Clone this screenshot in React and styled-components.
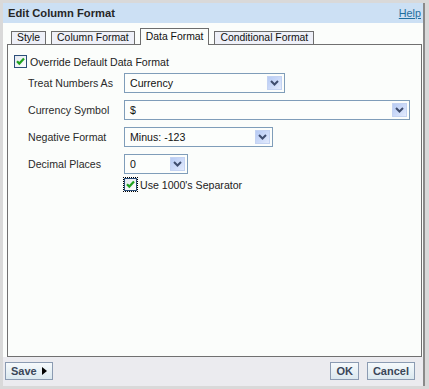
import React from 'react';
import styled, { createGlobalStyle } from 'styled-components';

const GlobalStyle = createGlobalStyle`
  html, body { margin: 0; padding: 0; }
  body {
    background: #d8d8d8;
    font-family: "Liberation Sans", Arial, sans-serif;
    color: #222;
  }
`;

const Page = styled.div`
  box-sizing: border-box;
  width: 429px;
  height: 389px;
  padding: 3px 4px 3px 3px;
  background: #d9d9d9;
`;

const Dialog = styled.div`
  box-sizing: border-box;
  width: 422px;
  height: 383px;
  border-right: 2px solid #8a8a8a;
  display: flex;
  flex-direction: column;
  background: #fbfdfb;
`;

const TitleBar = styled.div`
  height: 20px;
  flex: none;
  background: #cce0f4;
  display: flex;
  align-items: center;
  justify-content: space-between;
  padding: 0 2px 0 5px;
`;

const Title = styled.div`
  font-weight: bold;
  font-size: 11.2px;
  color: #262626;
`;

const HelpLink = styled.a`
  font-size: 10.8px;
  color: #1f6e9e;
  text-decoration: underline;
  cursor: pointer;
`;

const Body = styled.div`
  flex: 1;
  display: flex;
  flex-direction: column;
  padding: 5px 1px 0 4px;
  background: #fbfdfb;
`;

const TabRow = styled.div`
  height: 16px;
  flex: none;
  display: flex;
  align-items: flex-start;
  gap: 5px;
  padding-left: 4px;
`;

const Tab = styled.div`
  box-sizing: border-box;
  position: relative;
  z-index: 1;
  height: ${p => (p.$active ? '17px' : '13px')};
  margin-top: ${p => (p.$active ? '0' : '3px')};
  padding: ${p => (p.$active ? '2px 5px 0' : '0 5px')};
  border: 1px solid #6d6d6d;
  border-bottom: none;
  background: ${p => (p.$active ? '#fbfdfb' : '#eef0f8')};
  font-size: 10.4px;
  line-height: 12px;
  color: #111;
  white-space: nowrap;
`;

const Panel = styled.div`
  flex: 1;
  border: 1px solid #707070;
  background: #fbfdfb;
  padding: 10px 6px;
  display: flex;
  flex-direction: column;
`;

const CheckRow = styled.label`
  display: flex;
  align-items: center;
  gap: 3px;
  height: 13px;
  font-size: 10.6px;
  color: #222;
  margin-left: ${p => p.$indent || 0}px;
  margin-top: ${p => p.$top || 0}px;
`;

const CheckBoxFrame = styled.span`
  display: inline-flex;
  width: 13px;
  height: 13px;
  outline: ${p => (p.$focus ? '1px dotted #000' : 'none')};
`;

const Form = styled.div`
  display: grid;
  grid-template-columns: 96px auto;
  grid-auto-rows: 20px;
  row-gap: 7px;
  align-items: center;
  margin-top: 5px;
  padding-left: 14px;
`;

const Label = styled.div`
  font-size: 10.6px;
  color: #2a2a2a;
`;

const Select = styled.div`
  box-sizing: border-box;
  width: ${p => p.$w}px;
  height: 20px;
  border: 1px solid #7f9db9;
  background: #fcfefc;
  display: flex;
  align-items: center;
  padding: 0 2px 0 5px;
`;

const SelectText = styled.span`
  flex: 1;
  font-size: 10.6px;
  color: #111;
`;

const DropButton = styled.span`
  box-sizing: border-box;
  width: 15px;
  height: 14px;
  border: 1px solid #c4d3f2;
  background: linear-gradient(135deg, #b7cbf4 0%, #cddbf9 55%, #e3ebfd 100%);
  display: flex;
  align-items: center;
  justify-content: center;
`;

const Footer = styled.div`
  height: 29px;
  flex: none;
  background: #ebebef;
  display: flex;
  align-items: flex-start;
  justify-content: space-between;
  padding: 5px 8px 0 2px;
  box-sizing: border-box;
`;

const ButtonGroup = styled.div`
  display: flex;
  gap: 8px;
`;

const Button = styled.button`
  box-sizing: border-box;
  height: 18px;
  padding: 0 5px;
  border: 1px solid #8b9bb2;
  background: linear-gradient(#f6fafc, #dbe8ef);
  color: #3a4658;
  font-family: "Liberation Sans", Arial, sans-serif;
  font-weight: bold;
  font-size: 11px;
  display: inline-flex;
  align-items: center;
  gap: 5px;
  cursor: pointer;
`;

const Chevron = () => (
  <svg width="9" height="6" viewBox="0 0 9 6">
    <path d="M1 1 L4.5 4.5 L8 1" fill="none" stroke="#3e4d6e" strokeWidth="2" />
  </svg>
);

const Check = () => (
  <svg width="13" height="13" viewBox="0 0 13 13">
    <defs>
      <linearGradient id="cbg" x1="0" y1="0" x2="1" y2="1">
        <stop offset="0" stopColor="#e2e8ef" />
        <stop offset="1" stopColor="#ffffff" />
      </linearGradient>
    </defs>
    <rect x="0.5" y="0.5" width="12" height="12" fill="url(#cbg)" stroke="#2c4f79" />
    <path d="M3 6.2 L5.3 8.6 L10 3.6" fill="none" stroke="#1fa21f" strokeWidth="2.2" />
  </svg>
);

const Dropdown = ({ w, value }) => (
  <Select $w={w}>
    <SelectText>{value}</SelectText>
    <DropButton>
      <Chevron />
    </DropButton>
  </Select>
);

const Triangle = () => (
  <svg width="5" height="8" viewBox="0 0 5 8">
    <path d="M0 0 L5 4 L0 8 Z" fill="#000" />
  </svg>
);

export default function App() {
  return (
    <>
      <GlobalStyle />
      <Page>
        <Dialog>
          <TitleBar>
            <Title>Edit Column Format</Title>
            <HelpLink>Help</HelpLink>
          </TitleBar>
          <Body>
            <TabRow>
              <Tab>Style</Tab>
              <Tab>Column Format</Tab>
              <Tab $active>Data Format</Tab>
              <Tab>Conditional Format</Tab>
            </TabRow>
            <Panel>
              <CheckRow>
                <CheckBoxFrame><Check /></CheckBoxFrame>
                Override Default Data Format
              </CheckRow>
              <Form>
                <Label>Treat Numbers As</Label>
                <Dropdown w={161} value="Currency" />
                <Label>Currency Symbol</Label>
                <Dropdown w={286} value="$" />
                <Label>Negative Format</Label>
                <Dropdown w={149} value="Minus: -123" />
                <Label>Decimal Places</Label>
                <Dropdown w={64} value="0" />
              </Form>
              <CheckRow $indent={110} $top={4}>
                <CheckBoxFrame $focus><Check /></CheckBoxFrame>
                Use 1000's Separator
              </CheckRow>
            </Panel>
          </Body>
          <Footer>
            <Button>Save <Triangle /></Button>
            <ButtonGroup>
              <Button>OK</Button>
              <Button>Cancel</Button>
            </ButtonGroup>
          </Footer>
        </Dialog>
      </Page>
    </>
  );
}
